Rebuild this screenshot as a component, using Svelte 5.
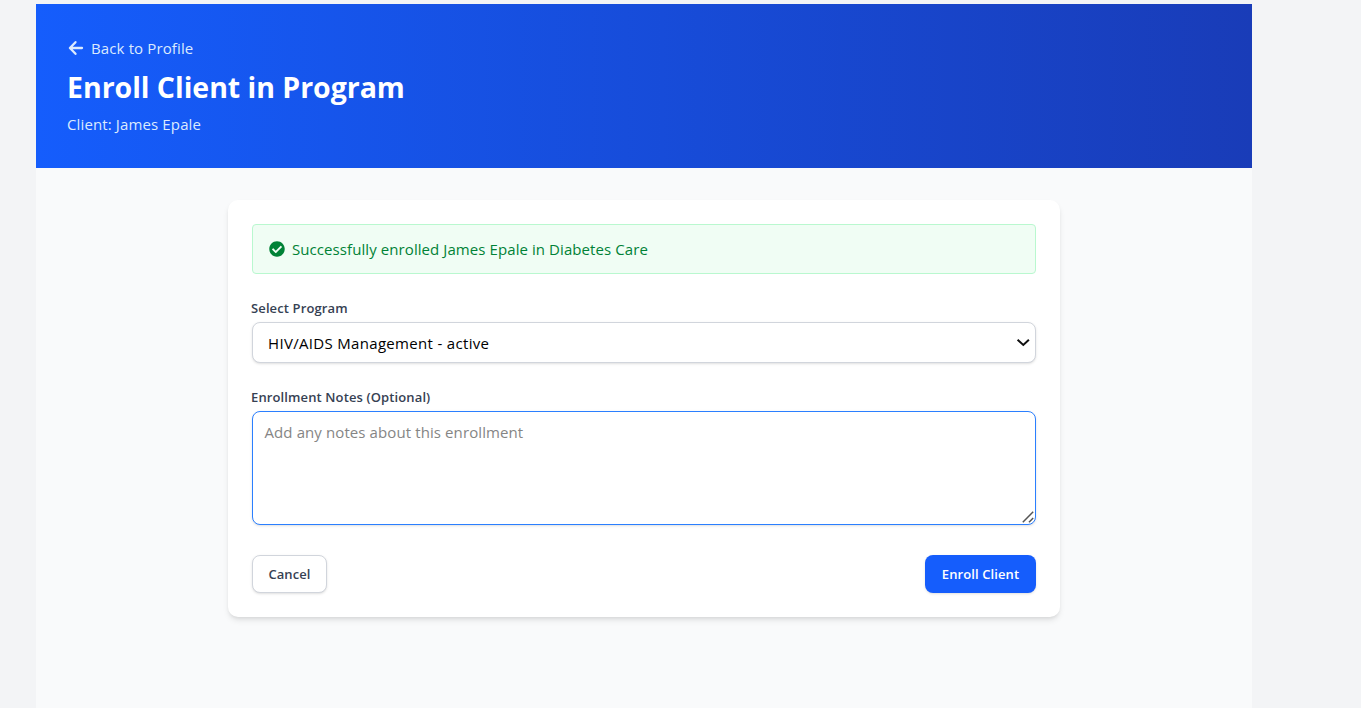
<script>
  let notes = $state('');
  const programs = ['HIV/AIDS Management - active'];
</script>

<div class="page">
  <header>
    <a class="back" href="#profile">
      <svg width="16" height="16" viewBox="0 0 16 16" fill="none" stroke="currentColor" stroke-width="2.300" stroke-linecap="round" stroke-linejoin="round"><path d="M14 8H2.600M7.500 2.200 1.900 8l5.600 5.800" /></svg>
      <span>Back to Profile</span>
    </a>
    <h1>Enroll Client in Program</h1>
    <p>Client: James Epale</p>
  </header>

  <main>
    <section class="card">
      <div class="alert">
        <svg width="16" height="16" viewBox="0 0 512 512" fill="currentColor"><path d="M504 256c0 137-111 248-248 248S8 393 8 256 119 8 256 8s248 111 248 248zM227.300 387.300l184-184c6.200-6.200 6.200-16.400 0-22.600l-22.600-22.600c-6.200-6.200-16.400-6.200-22.600 0L216 308.100l-70.100-70.100c-6.200-6.200-16.400-6.200-22.600 0l-22.600 22.600c-6.200 6.200-6.200 16.400 0 22.600l104 104c6.200 6.300 16.400 6.300 22.600.1z" /></svg>
        <span>Successfully enrolled James Epale in Diabetes Care</span>
      </div>

      <label for="program">Select Program</label>
      <div class="select">
        <select id="program">
          {#each programs as program}
            <option>{program}</option>
          {/each}
        </select>
        <svg width="14" height="10" viewBox="0 0 14 10" fill="none" stroke="#101010" stroke-width="2"><path d="M1.600 1.800 7.300 7l5.600-5.200" /></svg>
      </div>

      <label for="notes">Enrollment Notes (Optional)</label>
      <div class="notes">
        <textarea id="notes" rows="4" placeholder="Add any notes about this enrollment" bind:value={notes}></textarea>
        <svg width="12" height="12" viewBox="0 0 12 12" fill="none" stroke="#555" stroke-width="1.500"><path d="M.8 11.200 11.200.8M7 11.200 11.200 7" /></svg>
      </div>

      <div class="actions">
        <button class="cancel" type="button">Cancel</button>
        <button class="enroll" type="button">Enroll Client</button>
      </div>
    </section>
  </main>
</div>

<style>
  :global(body) {
    background: #f3f4f6;
    overflow: hidden;
  }
  .page, .page * {
    box-sizing: border-box;
  }
  .page {
    width: 1216px;
    height: 704px;
    margin: 4px 0 0 36px;
    background: #f9fafb;
    font-family: "Open Sans", "Noto Sans", sans-serif;
    font-size: 15px;
    line-height: 24px;
  }
  header {
    display: flex;
    flex-direction: column;
    gap: 8px;
    height: 164px;
    padding: 32px;
    background: linear-gradient(to right, #155dfc, #193cb8);
    color: #dbeafe;
  }
  .back {
    display: flex;
    align-items: center;
    gap: 7px;
    color: inherit;
    text-decoration: none;
    letter-spacing: 0.13px;
  }
  h1 {
    height: 36px;
    margin: 0 0 0 -1px;
    padding-top: 1px;
    color: #fff;
    font-size: 28.5px;
    font-weight: 750;
    line-height: 36px;
    letter-spacing: -0.03px;
  }
  p {
    margin: 0 0 0 -1px;
    letter-spacing: 0.13px;
  }
  main {
    padding: 32px 192px;
  }
  .card {
    height: 417px;
    padding: 24px;
    border-radius: 10px;
    background: #fff;
    box-shadow: 0 4px 6px -1px rgb(0 0 0 / 0.1), 0 2px 4px -2px rgb(0 0 0 / 0.1);
  }
  .alert {
    display: flex;
    align-items: center;
    gap: 7px;
    height: 50px;
    margin-bottom: 24px;
    padding: 0 16px;
    border: 1px solid #b9f8cf;
    border-radius: 4px;
    background: #f0fdf4;
    color: #008236;
    letter-spacing: 0.08px;
  }
  label {
    display: block;
    height: 20px;
    margin: 0 0 4px -1px;
    color: #364153;
    font-size: 13px;
    font-weight: 600;
    line-height: 20px;
    letter-spacing: 0.12px;
  }
  .select, .notes {
    display: grid;
    align-items: center;
  }
  .select > *, .notes > * {
    grid-area: 1 / 1;
  }
  .select {
    margin-bottom: 24px;
  }
  select {
    width: 100%;
    height: 41px;
    padding: 1px 15px 0;
    border: 1px solid #d1d5dc;
    border-radius: 8px;
    background: #fff;
    color: #000;
    font: inherit;
    letter-spacing: 0.32px;
    appearance: none;
    box-shadow: 0 1px 3px rgb(0 0 0 / 0.1), 0 1px 2px -1px rgb(0 0 0 / 0.1);
  }
  .select svg {
    justify-self: end;
    margin-right: 6px;
    pointer-events: none;
  }
  textarea {
    display: block;
    width: 100%;
    height: 114px;
    padding: 8px 11.500px;
    border: 1px solid #2b7fff;
    border-radius: 8px;
    outline: none;
    background: #fff;
    color: #000;
    font: inherit;
    letter-spacing: 0.1px;
    resize: none;
    box-shadow: 0 1px 3px rgb(0 0 0 / 0.1), 0 1px 2px -1px rgb(0 0 0 / 0.1);
  }
  textarea::placeholder {
    color: #858585;
    opacity: 1;
  }
  .notes svg {
    place-self: end;
    margin: 0 2px 2px 0;
    pointer-events: none;
  }
  .actions {
    display: flex;
    justify-content: space-between;
    margin-top: 30px;
  }
  button {
    height: 38px;
    padding: 0;
    border: 1px solid transparent;
    border-radius: 8px;
    font: 600 13px/20px "Open Sans", "Noto Sans", sans-serif;
    letter-spacing: 0.1px;
    white-space: nowrap;
    box-shadow: 0 1px 3px rgb(0 0 0 / 0.1), 0 1px 2px -1px rgb(0 0 0 / 0.1);
  }
  .cancel {
    width: 75px;
    border-color: #d1d5dc;
    background: #fff;
    color: #364153;
  }
  .enroll {
    width: 111px;
    background: #155dfc;
    color: #fff;
  }
</style>
